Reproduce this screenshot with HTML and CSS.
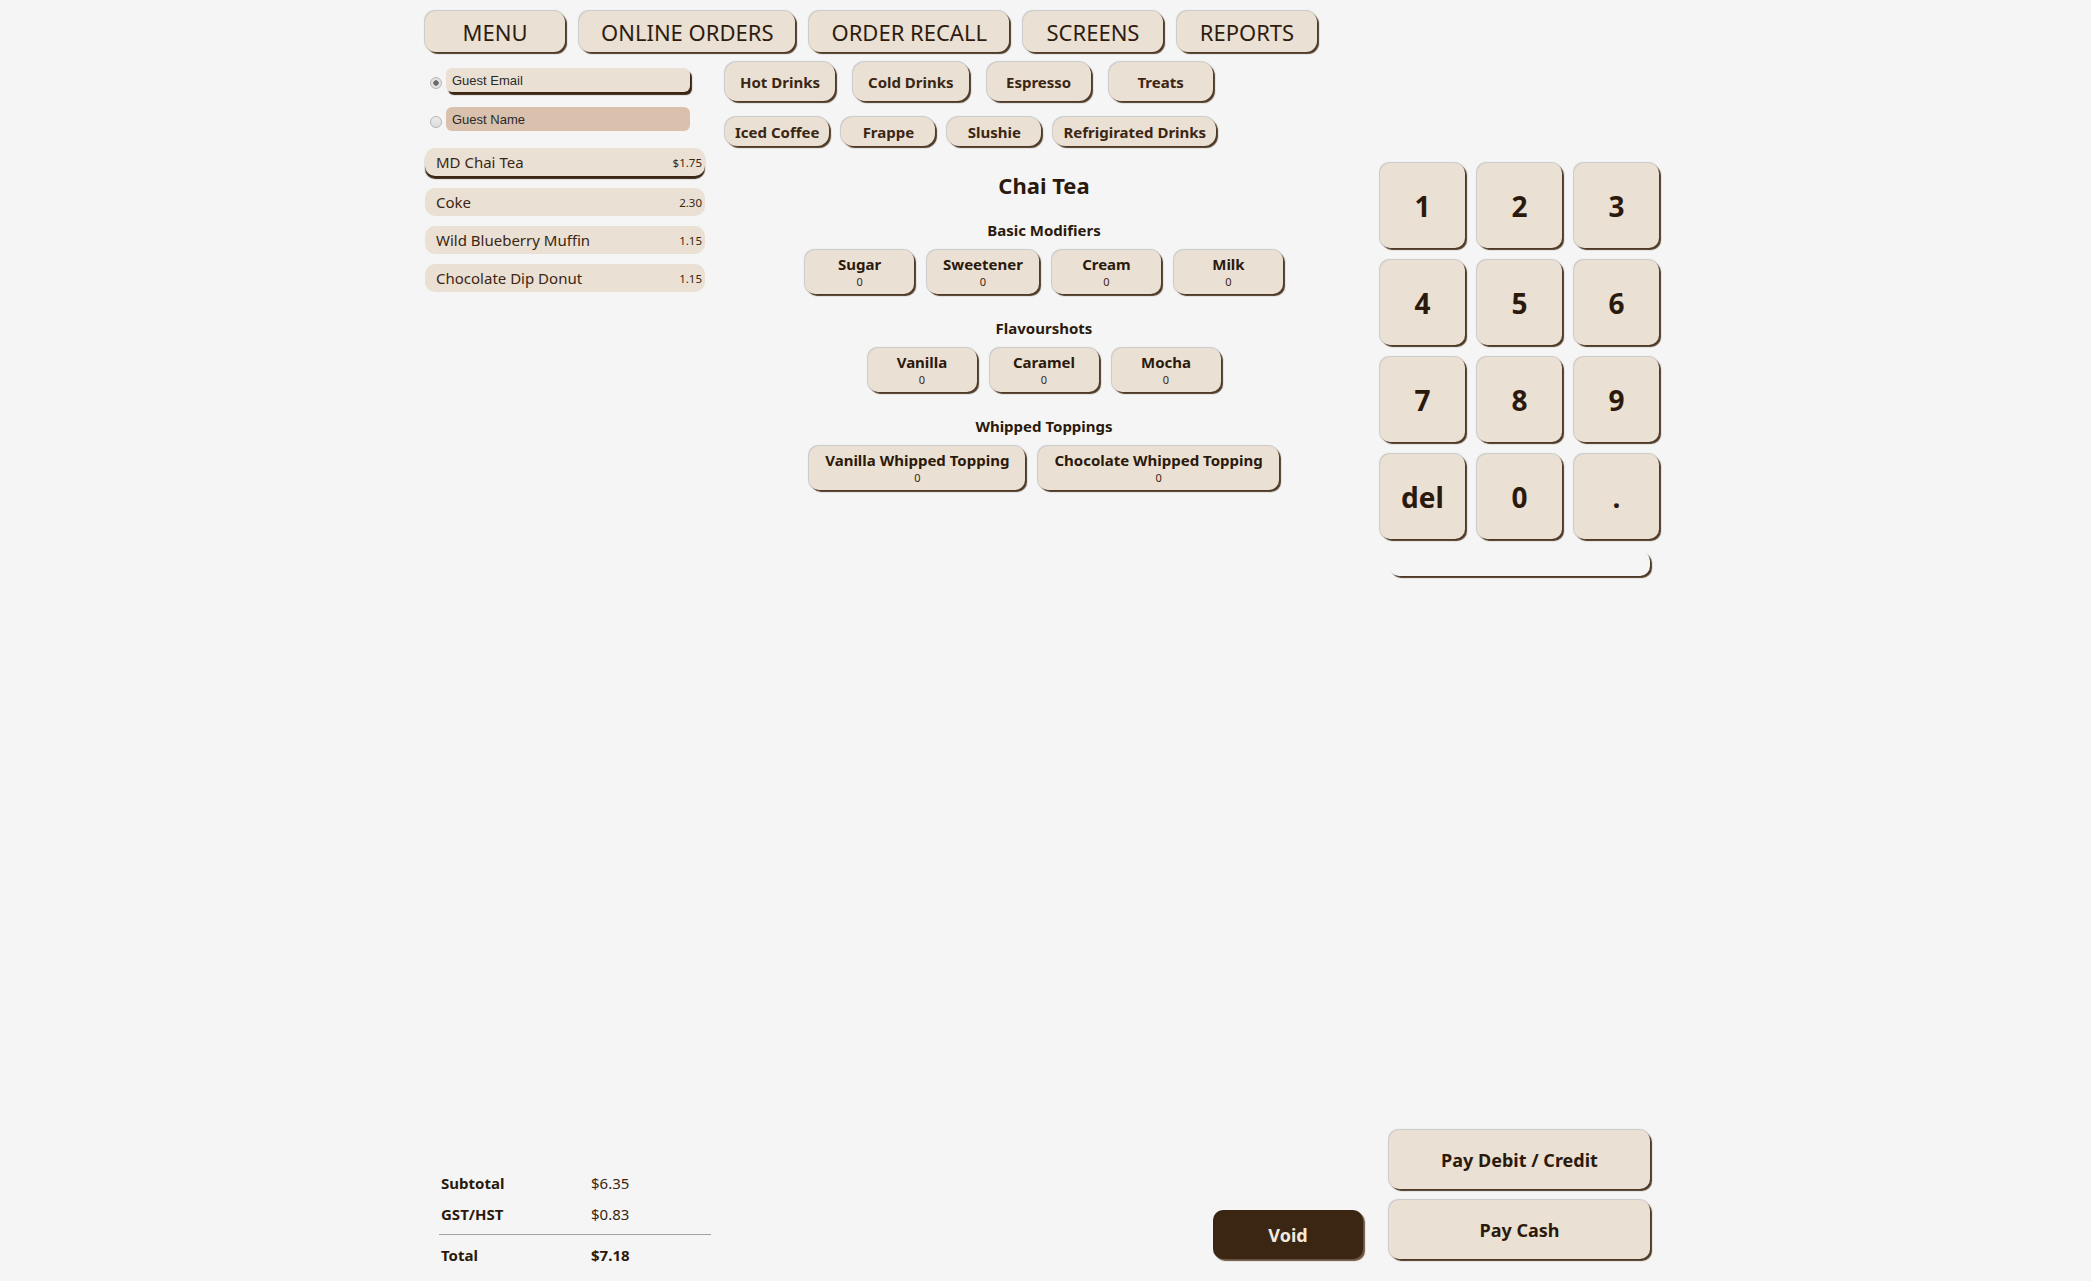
FILE: index.html
```html
<!DOCTYPE html>
<html lang="en">
<head>
<meta charset="utf-8">
<title>POS</title>
<link rel="stylesheet" href="styles.css">
</head>
<body>
<div class="app">
  <nav class="topnav">
    <button class="btn nav-btn">MENU</button>
    <button class="btn nav-btn">ONLINE ORDERS</button>
    <button class="btn nav-btn">ORDER RECALL</button>
    <button class="btn nav-btn">SCREENS</button>
    <button class="btn nav-btn">REPORTS</button>
  </nav>
  <div class="main">
    <section class="col-left">
      <div class="guest guest-first">
        <span class="radio checked"></span>
        <div class="guest-field focused">Guest Email</div>
      </div>
      <div class="guest guest-second">
        <span class="radio"></span>
        <div class="guest-field muted">Guest Name</div>
      </div>
      <div class="order-list">
        <div class="item selected"><span class="item-name">MD Chai Tea</span><span class="item-price">$1.75</span></div>
        <div class="item"><span class="item-name">Coke</span><span class="item-price">2.30</span></div>
        <div class="item"><span class="item-name">Wild Blueberry Muffin</span><span class="item-price">1.15</span></div>
        <div class="item"><span class="item-name">Chocolate Dip Donut</span><span class="item-price">1.15</span></div>
      </div>
      <div class="totals">
        <div class="tot-row"><span class="tot-label">Subtotal</span><span class="tot-value">$6.35</span></div>
        <div class="tot-row"><span class="tot-label">GST/HST</span><span class="tot-value">$0.83</span></div>
        <div class="tot-row tot-final"><span class="tot-label">Total</span><span class="tot-value">$7.18</span></div>
      </div>
    </section>

    <section class="col-mid">
      <div class="cats cats-main">
        <button class="btn cat">Hot Drinks</button>
        <button class="btn cat">Cold Drinks</button>
        <button class="btn cat">Espresso</button>
        <button class="btn cat">Treats</button>
      </div>
      <div class="cats cats-sub">
        <button class="btn cat">Iced Coffee</button>
        <button class="btn cat">Frappe</button>
        <button class="btn cat">Slushie</button>
        <button class="btn cat">Refrigirated Drinks</button>
      </div>
      <h2 class="product-title">Chai Tea</h2>
      <div class="mod-section mod-first">
        <h3 class="mod-title">Basic Modifiers</h3>
        <div class="mods">
          <button class="btn mod"><span class="mod-name">Sugar</span><span class="mod-count">0</span></button>
          <button class="btn mod"><span class="mod-name">Sweetener</span><span class="mod-count">0</span></button>
          <button class="btn mod"><span class="mod-name">Cream</span><span class="mod-count">0</span></button>
          <button class="btn mod"><span class="mod-name">Milk</span><span class="mod-count">0</span></button>
        </div>
      </div>
      <div class="mod-section">
        <h3 class="mod-title">Flavourshots</h3>
        <div class="mods">
          <button class="btn mod"><span class="mod-name">Vanilla</span><span class="mod-count">0</span></button>
          <button class="btn mod"><span class="mod-name">Caramel</span><span class="mod-count">0</span></button>
          <button class="btn mod"><span class="mod-name">Mocha</span><span class="mod-count">0</span></button>
        </div>
      </div>
      <div class="mod-section">
        <h3 class="mod-title">Whipped Toppings</h3>
        <div class="mods">
          <button class="btn mod"><span class="mod-name">Vanilla Whipped Topping</span><span class="mod-count">0</span></button>
          <button class="btn mod"><span class="mod-name">Chocolate Whipped Topping</span><span class="mod-count">0</span></button>
        </div>
      </div>
      <button class="btn void-btn">Void</button>
    </section>

    <section class="col-right">
      <div class="numpad">
        <button class="btn key">1</button>
        <button class="btn key">2</button>
        <button class="btn key">3</button>
        <button class="btn key">4</button>
        <button class="btn key">5</button>
        <button class="btn key">6</button>
        <button class="btn key">7</button>
        <button class="btn key">8</button>
        <button class="btn key">9</button>
        <button class="btn key">del</button>
        <button class="btn key">0</button>
        <button class="btn key">.</button>
      </div>
      <div class="display-bar"></div>
      <div class="pay">
        <button class="btn pay-btn">Pay Debit / Credit</button>
        <button class="btn pay-btn">Pay Cash</button>
      </div>
    </section>
  </div>
</div>
</body>
</html>
```

FILE: styles.css
```css
* { box-sizing: border-box; }
html, body { margin: 0; height: 100%; }
body {
  background: #f5f5f5;
  font-family: "Noto Sans", "Open Sans", sans-serif;
  color: #3a2613;
}
.app {
  width: 1241px;
  margin: 0 auto;
  height: 100vh;
  display: flex;
  flex-direction: column;
}

.btn {
  font-family: inherit;
  background: #eae0d3;
  color: #3a2613;
  border: none;
  border-radius: 10px;
  box-shadow: 2px 2px 1px #4e3a26, -0.5px -0.5px 1px rgba(0,0,0,0.18);
  display: flex;
  align-items: center;
  justify-content: center;
  padding: 0;
  margin: 0;
  white-space: nowrap;
  cursor: pointer;
}

/* top navigation */
.topnav {
  display: flex;
  gap: 14px;
  margin-top: 11px;
}
.nav-btn {
  height: 41px;
  min-width: 140px;
  padding: 0 22px;
  font-size: 22px;
  font-weight: 400;
  color: #2e1d0e;
  border-radius: 11px;
}

.main {
  flex: 1;
  min-height: 0;
  display: grid;
  grid-template-columns: 280px 1fr 286px;
  margin-top: 10px;
}

/* left column */
.col-left {
  display: flex;
  flex-direction: column;
}
.guest {
  display: flex;
  align-items: center;
}
.guest-first { margin-top: 6px; }
.guest-second { margin-top: 15px; }
.radio {
  flex: none;
  width: 12px;
  height: 12px;
  border-radius: 50%;
  border: 1px solid #b4b4b4;
  background: linear-gradient(#ededed, #dcdcdc);
  margin: 5px 4px 0 5px;
}
.radio.checked {
  background: radial-gradient(circle, #6a6a6a 0 2.4px, #e2e2e2 3px);
}
.guest-field {
  width: 244px;
  height: 24px;
  border-radius: 6px;
  background: #eae0d3;
  font-family: "Liberation Sans", Arial, sans-serif;
  font-size: 13px;
  color: #2a2a2a;
  padding: 0 6px;
  display: flex;
  align-items: center;
}
.guest-field.focused { box-shadow: 2px 3px 1px #3a2613; }
.guest-field.muted { background: #d9c1ad; }

.order-list {
  margin-top: 17px;
  display: flex;
  flex-direction: column;
}
.item {
  height: 28px;
  border-radius: 10px;
  background: #eae0d3;
  display: flex;
  justify-content: space-between;
  align-items: center;
  padding: 0 3px 0 11px;
  margin-bottom: 10px;
  font-size: 15px;
  color: #3a2613;
}
.item.selected {
  box-shadow: 0 3px 1px #3a2613;
  margin-bottom: 12px;
}
.item-price { font-size: 11.5px; }

.totals {
  margin-top: auto;
  margin-left: 14px;
  margin-bottom: 10px;
  width: 272px;
  font-size: 15px;
}
.tot-row {
  display: grid;
  grid-template-columns: 150px 1fr;
  line-height: 31px;
  padding-left: 2px;
}
.tot-label { font-weight: 700; color: #2b1a0c; }
.tot-value { color: #3a2613; }
.tot-final {
  border-top: 1px solid #a2a2a2;
  margin-top: 4px;
  padding-top: 5px;
}
.tot-final .tot-value { font-weight: 700; color: #2b1a0c; }

/* middle column */
.col-mid {
  display: flex;
  flex-direction: column;
  padding: 0 17px 0 20px;
}
.cats { display: flex; }
.cats-main { gap: 18px; }
.cats-sub { gap: 12px; margin-top: 16px; }
.cat {
  font-size: 15px;
  font-weight: 700;
  border-radius: 12px;
}
.cats-main .cat { height: 39px; min-width: 104px; padding: 0 15px; }
.cats-sub .cat { height: 29px; min-width: 94px; padding: 0 10px; }

.product-title {
  margin: 24px 0 0;
  text-align: center;
  font-size: 22px;
  line-height: 30px;
  font-weight: 700;
  color: #2b1a0c;
}
.mod-section { text-align: center; }
.mod-title {
  margin: 24px 0 10px;
  font-size: 15px;
  line-height: 20px;
  font-weight: 700;
  color: #2b1a0c;
}
.mod-first .mod-title { margin-top: 20px; }
.mods {
  display: flex;
  justify-content: center;
  gap: 13px;
}
.mod {
  min-width: 109px;
  height: 44px;
  padding: 4px 16px 0;
  flex-direction: column;
  justify-content: flex-start;
}
.mod-name {
  font-size: 15px;
  font-weight: 700;
  line-height: 20px;
  color: #2b1a0c;
}
.mod-count {
  font-size: 11px;
  line-height: 16px;
  font-weight: 400;
}

.void-btn {
  margin-top: auto;
  margin-bottom: 22px;
  align-self: flex-end;
  width: 150px;
  height: 49px;
  background: #3a2613;
  color: #f3eadf;
  font-size: 18px;
  font-weight: 700;
  box-shadow: 2px 2px 1px #6a5440;
}

/* right column */
.col-right {
  display: flex;
  flex-direction: column;
}
.numpad {
  display: grid;
  grid-template-columns: repeat(3, 85px);
  grid-auto-rows: 85px;
  gap: 12px;
  margin-top: 101px;
}
.key {
  font-size: 28px;
  font-weight: 700;
  color: #2b1a0c;
}
.display-bar {
  margin: 12px 0 0 9px;
  width: 261px;
  height: 25px;
  border-radius: 10px;
  background: #f5f5f5;
  box-shadow: 2px 2px 1px #4e3a26;
}
.pay {
  margin-top: auto;
  margin-left: 9px;
  margin-bottom: 22px;
  display: flex;
  flex-direction: column;
  gap: 11px;
}
.pay-btn {
  width: 261px;
  height: 59px;
  font-size: 18px;
  font-weight: 700;
  color: #2b1a0c;
}
```
